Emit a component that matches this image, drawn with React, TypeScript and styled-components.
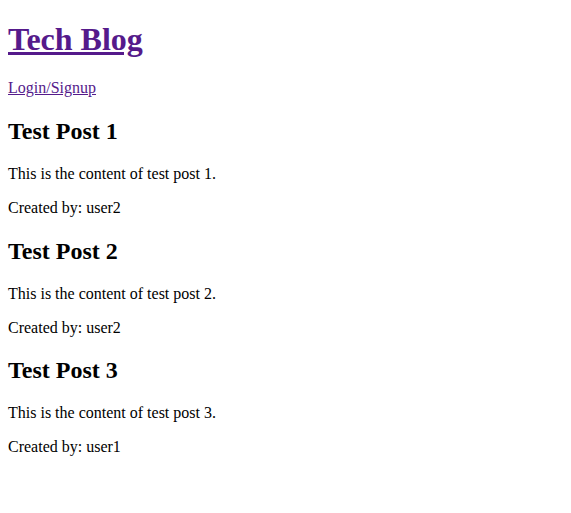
import React from "react";
import styled, { createGlobalStyle } from "styled-components";

const Global = createGlobalStyle`
  html, body { background: #ffffff; }
  body {
    margin: 0;
    font-family: "Liberation Serif", "Times New Roman", serif;
    font-size: 16px;
    color: #000000;
  }
`;

const Page = styled.div`
  display: flow-root;
  padding: 0 8px 8px;
`;

const Title = styled.h1`
  font-size: 32px;
  line-height: 36px;
  font-weight: bold;
  margin: 21.44px 0;
`;

const Link = styled.a`
  color: #551a8b;
  text-decoration: underline;
`;

const Nav = styled.p`
  margin: 16px 0;
  line-height: 18px;
`;

const PostTitle = styled.h2`
  font-size: 24px;
  line-height: 28px;
  font-weight: bold;
  margin: 19.92px 0;
`;

const Text = styled.p`
  margin: 16px 0;
  line-height: 18px;
`;

const posts = [
  { id: 1, user: "user2" },
  { id: 2, user: "user2" },
  { id: 3, user: "user1" },
];

export default function App() {
  return (
    <Page>
      <Global />
      <header>
        <Title>
          <Link href="#">Tech Blog</Link>
        </Title>
        <Nav>
          <Link href="#">Login/Signup</Link>
        </Nav>
      </header>
      <main>
        {posts.map((p) => (
          <article key={p.id}>
            <PostTitle>Test Post {p.id}</PostTitle>
            <Text>This is the content of test post {p.id}.</Text>
            <Text>Created by: {p.user}</Text>
          </article>
        ))}
      </main>
    </Page>
  );
}
